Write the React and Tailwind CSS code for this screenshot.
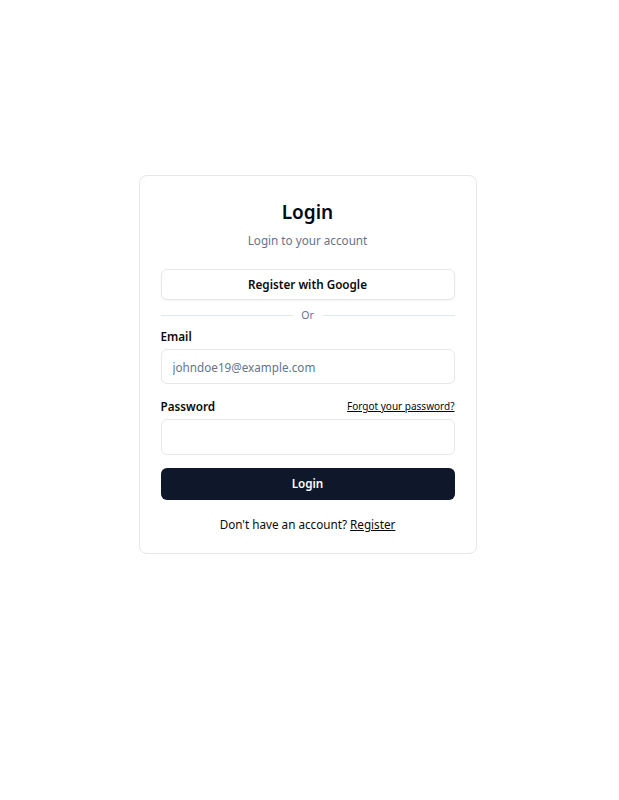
import React from 'react';

const App = () => {
  return (
    <div
      className="min-h-screen bg-white flex justify-center pt-[175px] pr-[4px] text-[#0a0a0a]"
      style={{ fontFamily: '"Noto Sans", "Open Sans", sans-serif' }}
    >
      <div className="w-[338px] h-fit rounded-lg border border-[#e5e7eb] px-[21px] pt-[22px] pb-[20px]">
        <div className="flex flex-col items-center">
          <h1 className="text-[19px] leading-[28px] font-semibold text-[#020817]">Login</h1>
          <p className="mt-[5px] text-[11.7px] leading-[18px] text-[#64748b]">Login to your account</p>
        </div>

        <button className="mt-[20px] w-full h-[31px] rounded-md border border-[#e5e7eb] bg-white text-[11.7px] font-semibold shadow-xs">
          Register with Google
        </button>

        <div className="mt-[8px] flex items-center gap-[8px]">
          <div className="flex-1 h-px bg-[#e2e8f0]" />
          <span className="text-[10.5px] text-[#64748b] leading-[14px]">Or</span>
          <div className="flex-1 h-px bg-[#e2e8f0]" />
        </div>

        <label className="mt-[5px] block text-[11.7px] font-semibold leading-[18px]">Email</label>
        <input
          className="mt-[4px] w-full h-[35px] rounded-md border border-[#e5e7eb] px-[11px] text-[11.7px] placeholder:text-[#64748b] outline-none"
          placeholder="johndoe19@example.com"
        />

        <div className="mt-[13px] flex items-center justify-between">
          <span className="text-[11.7px] font-semibold leading-[18px]">Password</span>
          <a className="text-[10px] underline leading-[16px] text-[#020817]" href="#">Forgot your password?</a>
        </div>
        <input
          type="password"
          className="mt-[4px] w-full h-[36px] rounded-md border border-[#e5e7eb] px-[11px] text-[11.7px] outline-none"
        />

        <button className="mt-[13px] w-full h-[32px] rounded-md bg-[#0f172a] text-white text-[11.7px] font-semibold">
          Login
        </button>

        <p className="mt-[15px] text-center text-[11.7px] leading-[18px]">
          Don't have an account? <a className="underline" href="#">Register</a>
        </p>
      </div>
    </div>
  );
};

export default App;
